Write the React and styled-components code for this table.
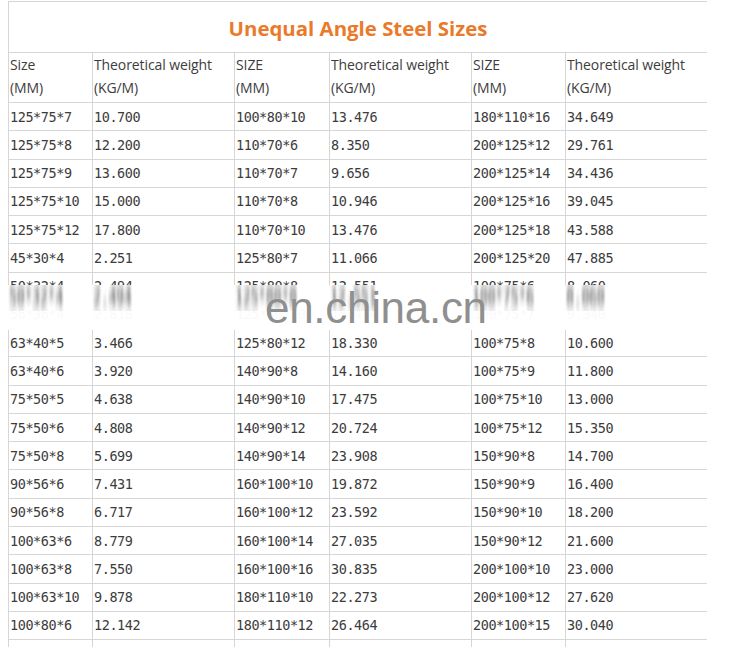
import React from "react";
import styled, { createGlobalStyle } from "styled-components";

const Global = createGlobalStyle`
  html, body { margin: 0; padding: 0; background: #fff; overflow: hidden; height: 100%; }
  #root { height: 100%; }
`;

const LINE = "#d6d6d6";
const COLS = "84px 142px 95px 142px 94px 142px";

const Page = styled.div`
  position: relative;
  padding: 1px 0 0 8px;
  height: 100%;
  box-sizing: border-box;
`;

const Table = styled.div`
  display: grid;
  grid-template-columns: ${COLS};
  grid-template-rows: 51px 50px;
  grid-auto-rows: 28.28px;
  border-top: 1px solid ${LINE};
  width: 699px;
`;

const TitleCell = styled.div`
  grid-column: 1 / -1;
  box-sizing: border-box;
  border-left: 1px solid ${LINE};
  border-bottom: 1px solid ${LINE};
  display: flex;
  align-items: center;
  justify-content: center;
  padding-top: 1px;
  font-family: "Open Sans", sans-serif;
  font-weight: 700;
  font-size: 20.4px;
  color: #ea7a2a;
`;

const HeadCell = styled.div`
  box-sizing: border-box;
  border-left: 1px solid ${LINE};
  border-bottom: 1px solid ${LINE};
  padding: 0 1px;
  font-family: "Open Sans", sans-serif;
  font-size: 14px;
  letter-spacing: -0.1px;
  line-height: 23px;
  color: #3d3d3d;
  white-space: nowrap;
`;

const Cell = styled.div`
  box-sizing: border-box;
  border-left: 1px solid ${LINE};
  border-bottom: 1px solid ${LINE};
  padding-left: 1px;
  display: flex;
  align-items: center;
  font-family: "DejaVu Sans Mono", monospace;
  font-size: 13.5px;
  letter-spacing: -0.43px;
  color: #3c3c3c;
  white-space: nowrap;
  overflow: hidden;
`;

const Band = styled.div`
  position: absolute;
  left: 8px;
  top: 285px;
  width: 699px;
  height: 45px;
  background: rgba(255, 255, 255, 0.97);
`;

const SmearRow = styled.div`
  display: grid;
  grid-template-columns: ${COLS};
  height: 26px;
  overflow: hidden;
`;

const Smear = styled.div`
  padding-left: 1px;
  font-family: "DejaVu Sans Mono", monospace;
  font-size: 13.5px;
  letter-spacing: -0.43px;
  line-height: 12px;
  color: #2e2e2e;
  white-space: nowrap;
  transform: scaleY(1.8);
  transform-origin: top left;
  filter: url(#vsmear);
  opacity: 0.9;
`;

const Watermark = styled.div`
  position: absolute;
  left: 257px;
  top: 1px;
  font-family: "Liberation Sans", Arial, sans-serif;
  font-size: 44px;
  line-height: 44px;
  color: #8f8f8f;
  letter-spacing: -0.3px;
`;

const FilterDefs = styled.svg`
  position: absolute;
  width: 0;
  height: 0;
`;

const rows = [
  ["125*75*7", "10.700", "100*80*10", "13.476", "180*110*16", "34.649"],
  ["125*75*8", "12.200", "110*70*6", "8.350", "200*125*12", "29.761"],
  ["125*75*9", "13.600", "110*70*7", "9.656", "200*125*14", "34.436"],
  ["125*75*10", "15.000", "110*70*8", "10.946", "200*125*16", "39.045"],
  ["125*75*12", "17.800", "110*70*10", "13.476", "200*125*18", "43.588"],
  ["45*30*4", "2.251", "125*80*7", "11.066", "200*125*20", "47.885"],
  ["50*32*4", "2.494", "125*80*8", "12.551", "100*75*6", "8.060"],
  ["56*36*4", "2.818", "125*80*10", "15.474", "100*75*7", "9.340"],
  ["63*40*5", "3.466", "125*80*12", "18.330", "100*75*8", "10.600"],
  ["63*40*6", "3.920", "140*90*8", "14.160", "100*75*9", "11.800"],
  ["75*50*5", "4.638", "140*90*10", "17.475", "100*75*10", "13.000"],
  ["75*50*6", "4.808", "140*90*12", "20.724", "100*75*12", "15.350"],
  ["75*50*8", "5.699", "140*90*14", "23.908", "150*90*8", "14.700"],
  ["90*56*6", "7.431", "160*100*10", "19.872", "150*90*9", "16.400"],
  ["90*56*8", "6.717", "160*100*12", "23.592", "150*90*10", "18.200"],
  ["100*63*6", "8.779", "160*100*14", "27.035", "150*90*12", "21.600"],
  ["100*63*8", "7.550", "160*100*16", "30.835", "200*100*10", "23.000"],
  ["100*63*10", "9.878", "180*110*10", "22.273", "200*100*12", "27.620"],
  ["100*80*6", "12.142", "180*110*12", "26.464", "200*100*15", "30.040"],
  ["100*80*7", "13.566", "180*110*14", "30.589", "200*100*16", "31.700"],
];

const heads = [
  ["Size", "(MM)"],
  ["Theoretical weight", "(KG/M)"],
  ["SIZE", "(MM)"],
  ["Theoretical weight", "(KG/M)"],
  ["SIZE", "(MM)"],
  ["Theoretical weight", "(KG/M)"],
];

export default function App() {
  return (
    <>
      <Global />
      <Page>
        <FilterDefs aria-hidden="true">
          <filter id="vsmear" x="-20%" y="-50%" width="140%" height="200%">
            <feGaussianBlur stdDeviation="1.2 3.2" />
          </filter>
        </FilterDefs>
        <Table>
          <TitleCell>Unequal Angle Steel Sizes</TitleCell>
          {heads.map((h, i) => (
            <HeadCell key={"h" + i}>
              {h[0]}
              <br />
              {h[1]}
            </HeadCell>
          ))}
          {rows.map((r, ri) =>
            r.map((c, ci) => <Cell key={ri + "-" + ci}>{c}</Cell>)
          )}
        </Table>
        <Band>
          <SmearRow aria-hidden="true">
            {rows[6].map((c, i) => (
              <Smear key={"s" + i}>{c}</Smear>
            ))}
          </SmearRow>
          <Watermark>en.china.cn</Watermark>
        </Band>
      </Page>
    </>
  );
}
